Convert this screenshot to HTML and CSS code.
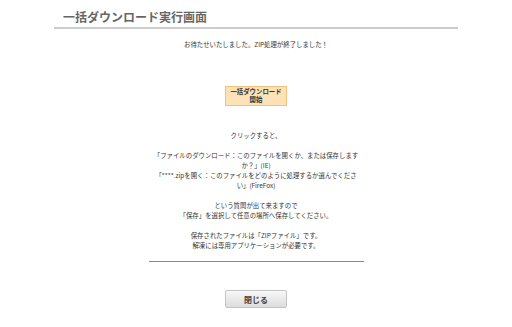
FILE: index.html
```html
<!DOCTYPE html>
<html lang="ja">

<head>
    <meta charset="UTF-8">
    <meta name="viewport" content="width=device-width, initial-scale=1.0">
    <title>一括ダウンロード実行画面</title>
    <link rel="stylesheet" href="styles.css">
</head>

<body>
    <div class="page">
        <h1 class="page-title">一括ダウンロード実行画面</h1>

        <p class="lead">お待たせいたしました。ZIP処理が終了しました！</p>

        <div class="action">
            <button class="start-button" type="button">一括ダウンロード<br>開始</button>
        </div>

        <div class="guide">
            <p>クリックすると、</p>
            <p>「ファイルのダウンロード：このファイルを開くか、または保存しますか？」(IE)<br>「****.zipを開く：このファイルをどのように処理するか選んでください」(FireFox)</p>
            <p>という質問が出て来ますので<br>「保存」を選択して任意の場所へ保存してください。</p>
            <p>保存されたファイルは「ZIPファイル」です。<br>解凍には専用アプリケーションが必要です。</p>
        </div>

        <hr class="divider">

        <div class="action">
            <button class="close-button" type="button">閉じる</button>
        </div>
    </div>
</body>

</html>
```

FILE: styles.css
```css
body {
    font-family: "Noto Sans CJK JP", "Liberation Sans", sans-serif;
    margin: 0;
    background-color: #ffffff;
    color: #333333;
}

.page {
    width: 404px;
    margin: 0 auto;
}

.page-title {
    margin: 0;
    padding: 10px 0 3px 9px;
    font-size: 12px;
    line-height: 14px;
    font-weight: bold;
    color: #666666;
    border-bottom: 2px solid #cccccc;
}

.lead {
    margin: 11px 0 0;
    text-align: center;
    font-size: 6.4px;
    line-height: 10px;
}

.action {
    display: flex;
    justify-content: center;
}

.start-button {
    margin-top: 36px;
    width: 62px;
    height: 20px;
    padding: 0;
    background-color: #fde2b8;
    border: 1px solid #f6c27a;
    border-radius: 0;
    font-family: inherit;
    font-size: 6.4px;
    line-height: 8px;
    font-weight: bold;
    color: #333333;
}

.guide {
    width: 208px;
    margin: 25px auto 0;
    text-align: center;
    font-size: 6.4px;
    line-height: 10px;
}

.guide p {
    margin: 0 0 10px;
}

.divider {
    width: 215px;
    margin: 8px auto 0;
    border: 0;
    border-top: 1px solid #888888;
}

.close-button {
    margin-top: 28px;
    width: 62px;
    height: 18px;
    padding: 0;
    background: linear-gradient(#f8f8f8, #dcdcdc);
    border: 1px solid #c4c4c4;
    border-radius: 2px;
    font-family: inherit;
    font-size: 8px;
    font-weight: bold;
    color: #444444;
}
```
